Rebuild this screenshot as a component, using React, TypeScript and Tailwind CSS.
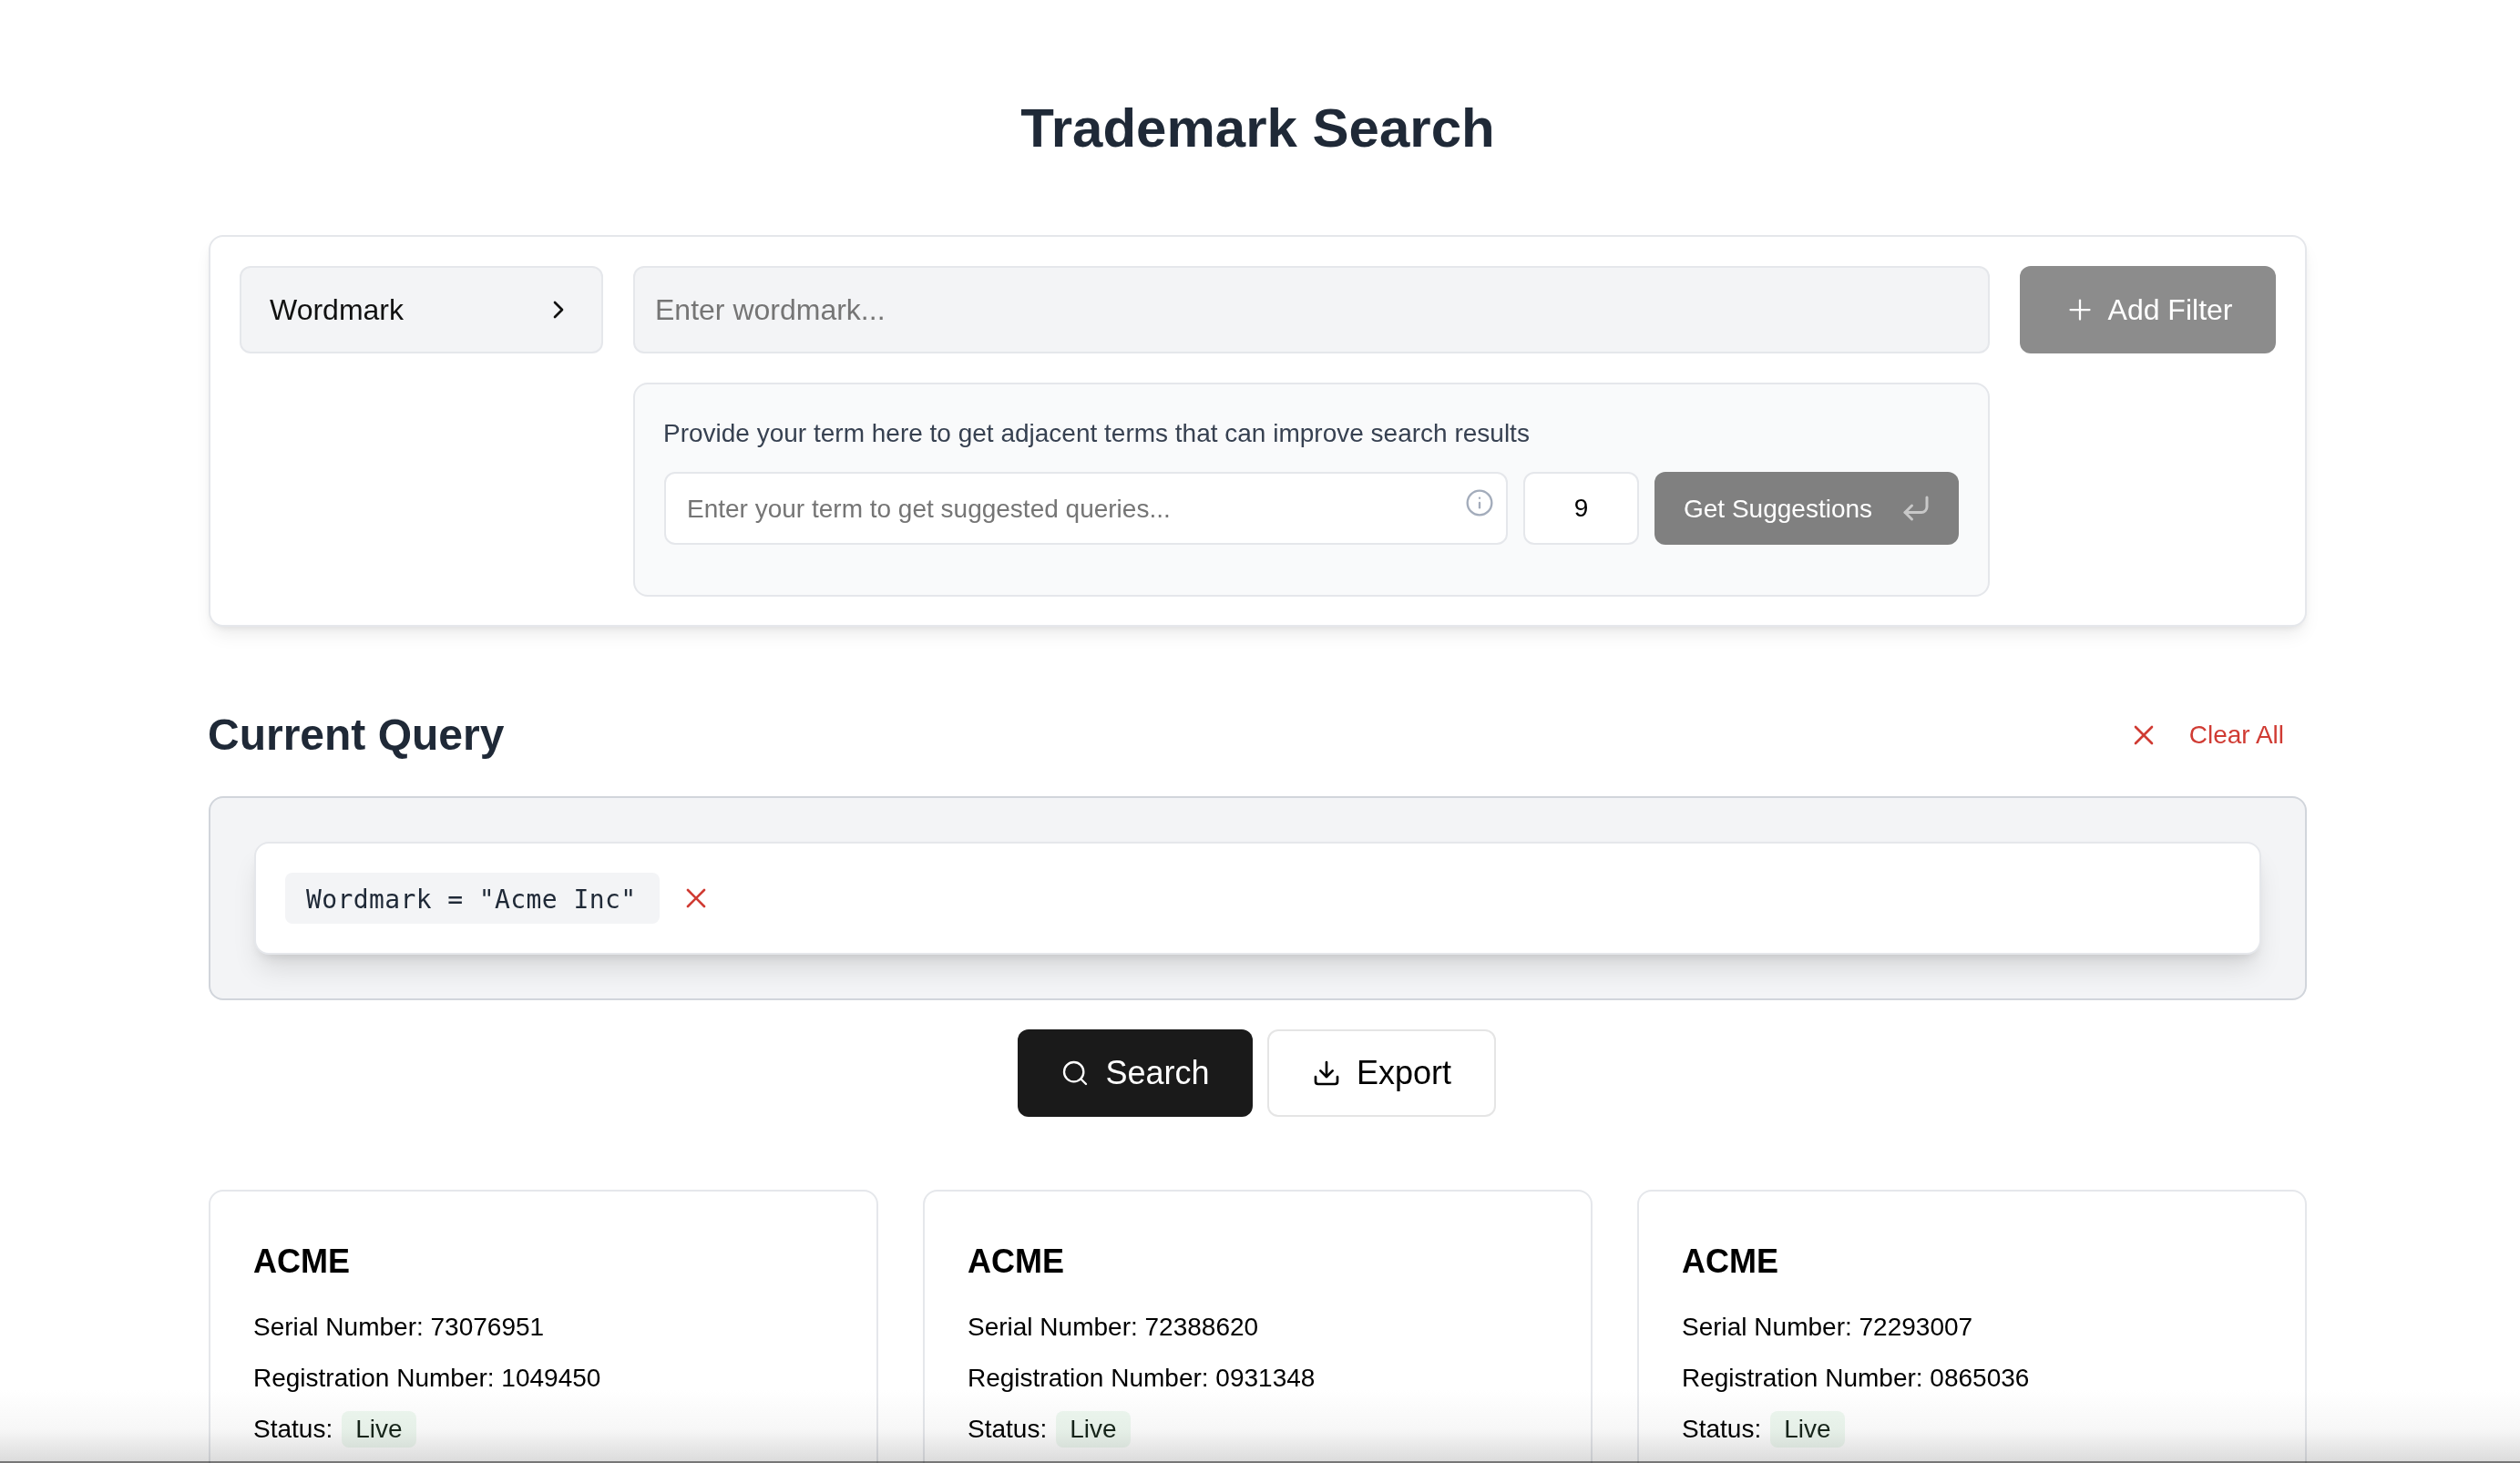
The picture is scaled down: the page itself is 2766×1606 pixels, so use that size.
import { ChevronRight, CornerDownLeft, Download, Info, Plus, Search, X } from 'lucide-react';

const results = [
  { serial: '73076951', registration: '1049450' },
  { serial: '72388620', registration: '0931348' },
  { serial: '72293007', registration: '0865036' },
];

export default function App() {
  return (
    <div className="relative h-[1606px] overflow-hidden bg-white font-['Liberation_Sans',Arial,sans-serif]">
      <div className="ml-[229px] w-[2303px] pt-[105px]">
        <h1 className="mb-[81px] text-center text-[60px] leading-[72px] font-bold text-[#1f2937]">Trademark Search</h1>

        {/* Filter card */}
        <div className="rounded-2xl border-2 border-[#e5e7eb] bg-white px-8 pt-8 pb-[31px] shadow-[0_12px_20px_-4px_rgba(0,0,0,0.08),0_4px_8px_-4px_rgba(0,0,0,0.1)]">
          <div className="flex items-start gap-[33px]">
            <button className="flex h-24 w-[399px] shrink-0 items-center justify-between rounded-xl border-2 border-[#e5e7eb] bg-[#f3f4f6] pr-[31px] pl-[31px] text-[32px] text-[#111111]">
              <span>Wordmark</span>
              <ChevronRight className="h-8 w-8" strokeWidth={2} />
            </button>

            <div className="flex w-[1489px] shrink-0 flex-col gap-8">
              <input
                className="h-24 w-full rounded-xl border-2 border-[#e5e7eb] bg-[#f3f4f6] px-[22px] text-[32px] outline-none placeholder:text-[#757575]"
                placeholder="Enter wordmark..."
              />

              <div className="rounded-2xl border-2 border-[#e5e7eb] bg-[#f9fafb] px-8 pt-[34px] pb-[55px]">
                <p className="mb-[22px] -ml-[1px] text-[28px] leading-10 text-[#374151]">
                  Provide your term here to get adjacent terms that can improve search results
                </p>
                <div className="flex gap-[17px]">
                  <div className="relative w-[926px] shrink-0">
                    <input
                      className="h-20 w-full rounded-xl border-2 border-[#e5e7eb] bg-white pt-[2px] pr-16 pl-[23px] text-[28px] outline-none placeholder:text-[#757575]"
                      placeholder="Enter your term to get suggested queries..."
                    />
                    <Info className="absolute top-[18px] right-[15px] h-8 w-8 text-[#a3acbb]" strokeWidth={1.75} />
                  </div>
                  <div className="flex h-20 w-[127px] shrink-0 items-center justify-center rounded-xl border-2 border-[#e5e7eb] bg-white text-[28px] text-black">
                    9
                  </div>
                  <button className="flex h-20 w-[334px] shrink-0 items-center justify-between rounded-xl bg-[#808080] pr-[29px] pl-8 text-[28px] text-white">
                    <span className="mt-[2px]">Get Suggestions</span>
                    <CornerDownLeft className="h-9 w-9 text-[#c8c8c8]" strokeWidth={2} />
                  </button>
                </div>
              </div>
            </div>

            <button className="flex h-24 w-[281px] shrink-0 items-center justify-center gap-[13px] rounded-xl bg-[#8c8c8c] text-[32px] text-white">
              <Plus className="h-9 w-9" strokeWidth={1.5} />
              <span>Add Filter</span>
            </button>
          </div>
        </div>

        {/* Current query */}
        <div className="mt-[91px] mb-[39px] flex h-14 items-center justify-between">
          <h2 className="-ml-[1px] text-[48px] leading-14 font-bold text-[#1f2937]">Current Query</h2>
          <button className="mr-[25px] flex items-center gap-8 text-[28px] text-[#d03b33]">
            <X className="h-9 w-9" strokeWidth={1.75} />
            <span>Clear All</span>
          </button>
        </div>

        <div className="rounded-2xl border-2 border-[#d1d5db] bg-[#f3f4f6] p-12">
          <div className="flex items-center rounded-2xl border-2 border-[#e5e7eb] bg-white p-8 shadow-[0_20px_30px_-6px_rgba(0,0,0,0.12),0_8px_12px_-6px_rgba(0,0,0,0.1)]">
            <span className="flex h-14 w-[411px] items-center rounded-lg bg-[#f3f4f6] pt-[3px] pl-[23px] font-['DejaVu_Sans_Mono',monospace] text-[28px] tracking-[0.4px] whitespace-pre text-[#1f2937]">
              Wordmark = "Acme Inc"
            </span>
            <X className="ml-[22px] h-9 w-9 text-[#d03b33]" strokeWidth={1.75} />
          </div>
        </div>

        <div className="mt-8 flex justify-center gap-4 pr-[2px]">
          <button className="flex h-24 w-[258px] items-center justify-center gap-[17px] rounded-xl bg-[#1a1a1a] text-[36px] text-white">
            <Search className="h-8 w-8" strokeWidth={1.75} />
            <span>Search</span>
          </button>
          <button className="flex h-24 w-[251px] items-center justify-center gap-[17px] rounded-xl border-2 border-[#e5e5e5] bg-white text-[36px] text-black">
            <Download className="h-8 w-8" strokeWidth={2} />
            <span>Export</span>
          </button>
        </div>

        {/* Results */}
        <div className="mt-20 grid grid-cols-3 gap-[49px]">
          {results.map((r) => (
            <div key={r.serial} className="h-[420px] rounded-2xl border-2 border-[#e5e7eb] bg-white px-12 pt-[50px] pl-[47px] text-[28px] leading-[42px] text-black">
              <h3 className="mb-6 text-[36px] leading-[54px] font-bold">ACME</h3>
              <p className="mb-[14px]">Serial Number: {r.serial}</p>
              <p className="mb-[14px]">Registration Number: {r.registration}</p>
              <p className="flex items-center gap-[10px]">
                <span>Status:</span>
                <span className="rounded-lg bg-[#eef8f0] px-[15px] leading-10 text-[#16251a]">Live</span>
              </p>
            </div>
          ))}
        </div>
      </div>

      {/* bottom edge shade */}
      <div className="pointer-events-none absolute inset-x-0 bottom-0 h-20 border-b-2 border-[#777777] bg-gradient-to-b from-white via-[#f7f7f7] via-55% to-[#dcdcdc] mix-blend-multiply" />
    </div>
  );
}
